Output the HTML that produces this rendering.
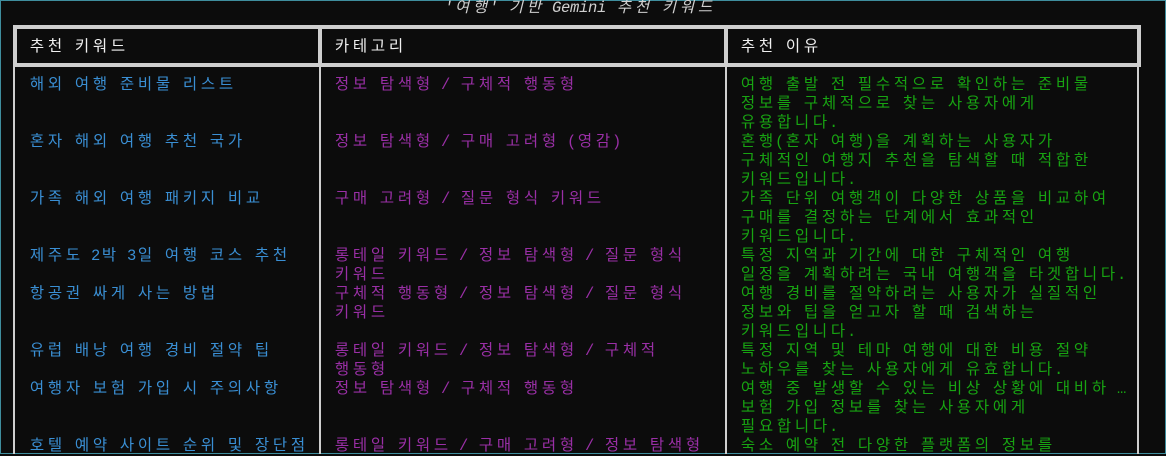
<!DOCTYPE html>
<html><head><meta charset="utf-8">
<style>
html,body{margin:0;padding:0;}
body{width:1166px;height:454px;background:#0c0c0c;position:relative;overflow:hidden;font-family:"Liberation Mono","Noto Sans CJK KR",monospace;font-size:15.5px;}
.frame{position:absolute;left:0;top:0;width:1164px;height:452px;border:1px solid #3f8e9e;}
.l{position:absolute;height:19px;line-height:19px;white-space:nowrap;}
.l span{display:inline-block;text-align:center;overflow:visible;}
.h{color:#f0f0f0;}
.b{color:#3a8fd4;}
.m{color:#9a2fa6;}
.g{color:#18a412;}
.t{color:#cfcfcf;font-style:italic;}
.hb{position:absolute;left:13px;top:25px;width:1120px;height:34px;border:4px solid #cfcfcf;}
.vd{position:absolute;background:#cfcfcf;}
</style></head><body>
<div class="frame"></div>
<div class="hb"></div>
<div class="vd" style="left:318px;top:25px;width:4px;height:41px"></div>
<div class="vd" style="left:724px;top:25px;width:4px;height:41px"></div>
<div class="vd" style="left:13px;top:66px;width:2px;height:388px"></div>
<div class="vd" style="left:319px;top:66px;width:2px;height:388px"></div>
<div class="vd" style="left:725px;top:66px;width:2px;height:388px"></div>
<div class="vd" style="left:1137px;top:66px;width:2px;height:388px"></div>

<div class="l t" style="left:444px;top:-1px">'여행' 기반 Gemini 추천 키워드</div>
<div class="l h" style="left:28px;top:38px">추천 키워드</div>
<div class="l h" style="left:333px;top:38px">카테고리</div>
<div class="l h" style="left:739px;top:38px">추천 이유</div>

<div class="l b" style="left:28px;top:76px">해외 여행 준비물 리스트</div>
<div class="l m" style="left:333px;top:76px">정보 탐색형 / 구체적 행동형</div>
<div class="l g" style="left:739px;top:76px">여행 출발 전 필수적으로 확인하는 준비물</div>
<div class="l g" style="left:739px;top:95px">정보를 구체적으로 찾는 사용자에게</div>
<div class="l g" style="left:739px;top:114px">유용합니다.</div>

<div class="l b" style="left:28px;top:133px">혼자 해외 여행 추천 국가</div>
<div class="l m" style="left:333px;top:133px">정보 탐색형 / 구매 고려형 (영감)</div>
<div class="l g" style="left:739px;top:133px">혼행(혼자 여행)을 계획하는 사용자가</div>
<div class="l g" style="left:739px;top:152px">구체적인 여행지 추천을 탐색할 때 적합한</div>
<div class="l g" style="left:739px;top:171px">키워드입니다.</div>

<div class="l b" style="left:28px;top:190px">가족 해외 여행 패키지 비교</div>
<div class="l m" style="left:333px;top:190px">구매 고려형 / 질문 형식 키워드</div>
<div class="l g" style="left:739px;top:190px">가족 단위 여행객이 다양한 상품을 비교하여</div>
<div class="l g" style="left:739px;top:209px">구매를 결정하는 단계에서 효과적인</div>
<div class="l g" style="left:739px;top:228px">키워드입니다.</div>

<div class="l b" style="left:28px;top:247px">제주도 2박 3일 여행 코스 추천</div>
<div class="l m" style="left:333px;top:247px">롱테일 키워드 / 정보 탐색형 / 질문 형식</div>
<div class="l m" style="left:333px;top:266px">키워드</div>
<div class="l g" style="left:739px;top:247px">특정 지역과 기간에 대한 구체적인 여행</div>
<div class="l g" style="left:739px;top:266px">일정을 계획하려는 국내 여행객을 타겟합니다.</div>

<div class="l b" style="left:28px;top:285px">항공권 싸게 사는 방법</div>
<div class="l m" style="left:333px;top:285px">구체적 행동형 / 정보 탐색형 / 질문 형식</div>
<div class="l m" style="left:333px;top:304px">키워드</div>
<div class="l g" style="left:739px;top:285px">여행 경비를 절약하려는 사용자가 실질적인</div>
<div class="l g" style="left:739px;top:304px">정보와 팁을 얻고자 할 때 검색하는</div>
<div class="l g" style="left:739px;top:323px">키워드입니다.</div>

<div class="l b" style="left:28px;top:342px">유럽 배낭 여행 경비 절약 팁</div>
<div class="l m" style="left:333px;top:342px">롱테일 키워드 / 정보 탐색형 / 구체적</div>
<div class="l m" style="left:333px;top:361px">행동형</div>
<div class="l g" style="left:739px;top:342px">특정 지역 및 테마 여행에 대한 비용 절약</div>
<div class="l g" style="left:739px;top:361px">노하우를 찾는 사용자에게 유효합니다.</div>

<div class="l b" style="left:28px;top:380px">여행자 보험 가입 시 주의사항</div>
<div class="l m" style="left:333px;top:380px">정보 탐색형 / 구체적 행동형</div>
<div class="l g" style="left:739px;top:380px">여행 중 발생할 수 있는 비상 상황에 대비하 …</div>
<div class="l g" style="left:739px;top:399px">보험 가입 정보를 찾는 사용자에게</div>
<div class="l g" style="left:739px;top:418px">필요합니다.</div>

<div class="l b" style="left:28px;top:437px">호텔 예약 사이트 순위 및 장단점</div>
<div class="l m" style="left:333px;top:437px">롱테일 키워드 / 구매 고려형 / 정보 탐색형</div>
<div class="l g" style="left:739px;top:437px">숙소 예약 전 다양한 플랫폼의 정보를</div>

<script>
var W=9.0;
document.querySelectorAll('.l').forEach(function(el){
  var s=el.textContent,h='';
  for(var i=0;i<s.length;i++){
    var c=s[i],code=c.charCodeAt(0);
    var w=(code>=0x1100&&code!==0x2026)?2:1;
    var t=c===' '?'&nbsp;':c.replace('<','&lt;');
    h+='<span style="width:'+(w*W)+'px">'+t+'</span>';
  }
  el.innerHTML=h;
});
</script>
</body></html>
